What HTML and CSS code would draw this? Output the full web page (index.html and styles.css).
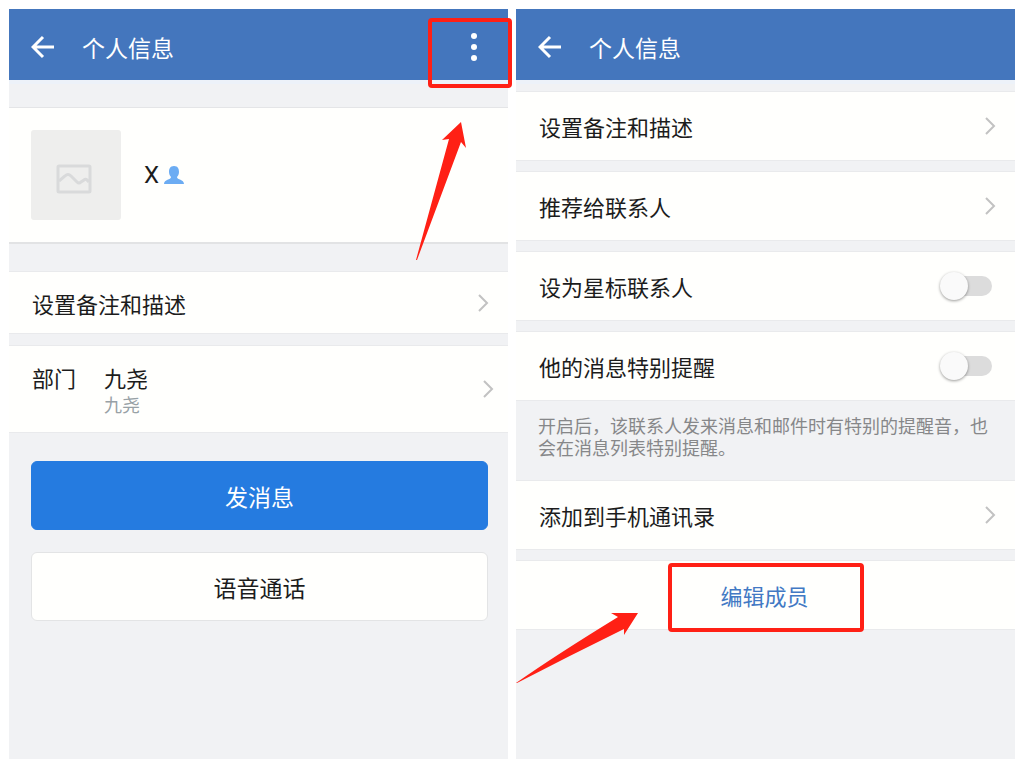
FILE: index.html
```html
<!DOCTYPE html>
<html lang="zh-CN">
<head>
  <meta charset="UTF-8" />
  <meta name="viewport" content="width=device-width, initial-scale=1.0" />
  <title>个人信息</title>
  <link rel="stylesheet" href="styles.css">
</head>
<body>

  <!-- 左侧：个人信息 -->
  <section class="panel">
    <header class="header">
      <button class="icon-btn" aria-label="返回">
        <svg width="24" height="24" viewBox="0 0 24 24"><path d="M12 2 2 12l10 10M2 12h21" fill="none" stroke="#fff" stroke-width="3"/></svg>
      </button>
      <h1 class="title">个人信息</h1>
      <button class="icon-btn menu-btn" aria-label="更多">
        <svg width="8" height="30" viewBox="0 0 8 30"><g fill="#fff"><circle cx="4" cy="4" r="3"/><circle cx="4" cy="15" r="3"/><circle cx="4" cy="26" r="3"/></g></svg>
      </button>
      <div class="mark mark-menu"></div>
    </header>

    <div class="profile">
      <svg class="avatar" viewBox="0 0 90 90">
        <rect x="27" y="36" width="32" height="26" rx="1" fill="none" stroke="#d9dadb" stroke-width="3"/>
        <path d="M28 51l6-5q3-3 6 0l6 6q2 2 4 0l3-2q2-2 5 2" fill="none" stroke="#d9dadb" stroke-width="3"/>
      </svg>
      <span class="name">X</span>
      <svg class="person" width="20" height="19" viewBox="0 0 20 19"><path d="M10 0c4 0 5 3 5 6 0 2-1 4-2 5 0 3 7 2 7 7H0c0-5 7-4 7-7-1-1-2-3-2-5 0-3 1-6 5-6z" fill="#6cacf3"/></svg>
      <svg class="arrow arrow-menu" width="50" height="139" viewBox="0 0 50 139"><path d="M45 0 26 18l7-1L0 138h1L45 20l5 6z"/></svg>
    </div>

    <a class="row row-short" href="#">
      <span>设置备注和描述</span>
      <svg class="chevron" width="11" height="18" viewBox="0 0 11 18"><path d="m1 1 8 8-8 8"/></svg>
    </a>

    <a class="row row-dept" href="#">
      <span class="dept-label">部门</span>
      <span class="dept">九尧<small>九尧</small></span>
      <svg class="chevron" width="11" height="18" viewBox="0 0 11 18"><path d="m1 1 8 8-8 8"/></svg>
    </a>

    <div class="actions">
      <button class="btn btn-primary">发消息</button>
      <button class="btn">语音通话</button>
    </div>
  </section>

  <!-- 右侧：更多设置 -->
  <section class="panel">
    <header class="header">
      <button class="icon-btn" aria-label="返回">
        <svg width="24" height="24" viewBox="0 0 24 24"><path d="M12 2 2 12l10 10M2 12h21" fill="none" stroke="#fff" stroke-width="3"/></svg>
      </button>
      <h1 class="title">个人信息</h1>
    </header>

    <a class="row" href="#">
      <span>设置备注和描述</span>
      <svg class="chevron" width="11" height="18" viewBox="0 0 11 18"><path d="m1 1 8 8-8 8"/></svg>
    </a>
    <a class="row" href="#">
      <span>推荐给联系人</span>
      <svg class="chevron" width="11" height="18" viewBox="0 0 11 18"><path d="m1 1 8 8-8 8"/></svg>
    </a>
    <div class="row">
      <label for="star">设为星标联系人</label>
      <input id="star" class="switch" type="checkbox" />
    </div>
    <div class="row">
      <label for="remind">他的消息特别提醒</label>
      <input id="remind" class="switch" type="checkbox" />
    </div>
    <p class="note">开启后，该联系人发来消息和邮件时有特别的提醒音，也会在消息列表特别提醒。</p>
    <a class="row row-flush" href="#">
      <span>添加到手机通讯录</span>
      <svg class="chevron" width="11" height="18" viewBox="0 0 11 18"><path d="m1 1 8 8-8 8"/></svg>
    </a>
    <div class="row row-edit">
      <button class="edit-btn">编辑成员<span class="mark mark-edit"></span>
        <svg class="arrow arrow-edit" width="122" height="71" viewBox="0 0 122 71"><path d="M122 0H95l7 4Q40 42 0 70h1Q55 42 108 16v6z"/></svg>
      </button>
    </div>
  </section>

</body>
</html>
```
FILE: styles.css
```css
* {
  box-sizing: border-box;
}

body {
  margin: 0;
  padding: 9px 9px 0;
  min-height: 100vh;
  display: flex;
  gap: 8px;
  background: #fff;
  color: #1c1c1c;
  font-family: "Noto Sans CJK SC", sans-serif;
  font-size: 22px;
  line-height: 30px;
}

button {
  font: inherit;
  color: inherit;
  cursor: pointer;
}

a {
  color: inherit;
  text-decoration: none;
}

.panel {
  flex: 1;
  min-width: 0;
  background: #f1f2f4;
}

/* Header */
.header {
  position: relative;
  display: flex;
  align-items: center;
  height: 71px;
  padding: 0 30px 0 22px;
  background: #4476bd;
  box-shadow: 0 4px 0 #edf2f9;
  color: #fff;
}

.icon-btn {
  display: flex;
  padding: 4px 0 0;
  border: none;
  background: none;
}

.menu-btn {
  margin-left: auto;
}

.title {
  margin: 4px 0 0 27px;
  font-size: 23px;
  font-weight: 400;
}

/* Profile card */
.profile {
  position: relative;
  display: flex;
  align-items: center;
  margin-top: 27px;
  padding: 22px;
  background: #fffffd;
  border-top: 1px solid #e4e5e7;
  border-bottom: 2px solid #e2e3e4;
}

.avatar {
  width: 90px;
  height: 90px;
  border-radius: 3px;
  background: #eeeeed;
}

.name {
  margin: 0 5px 0 23px;
  font-family: Roboto, sans-serif;
  font-size: 24px;
}

/* List rows */
.row {
  display: flex;
  align-items: center;
  justify-content: space-between;
  min-height: 68px;
  margin-top: 12px;
  padding: 0 19px 0 23px;
  background: #fffffd;
  box-shadow: 0 -1px 0 #e9eaec, 0 1px 0 #e9eaec;
}

.row-short {
  min-height: 61px;
  margin-top: 28px;
}

.row-dept {
  min-height: 86px;
  margin-top: 13px;
  padding-right: 14px;
}

.row-flush {
  margin-top: 0;
}

.dept-label {
  align-self: flex-start;
  width: 72px;
  margin-top: 16px;
}

.dept {
  flex: 1;
}

.dept small {
  display: block;
  color: #98a1a6;
  font-size: 18px;
  line-height: 24px;
}

.chevron {
  flex: none;
  fill: none;
  stroke: #c2c2c2;
  stroke-width: 2;
}

.note {
  margin: 0;
  min-height: 81px;
  padding: 14px 22px;
  color: #868789;
  font-size: 18px;
  line-height: 22px;
}

/* Switch */
.switch {
  appearance: none;
  position: relative;
  width: 52px;
  height: 28px;
  margin: 0 4px 0 0;
  cursor: pointer;
}

.switch::before {
  content: "";
  position: absolute;
  inset: 4px 0 4px 4px;
  border-radius: 10px;
  background: #dcdcdc;
}

.switch::after {
  content: "";
  position: absolute;
  top: 0;
  left: 0;
  width: 28px;
  height: 28px;
  border-radius: 50%;
  background: #fafafa;
  box-shadow: 0 1px 3px rgba(0, 0, 0, 0.4);
}

.switch:checked::after {
  left: 24px;
}

/* Buttons */
.actions {
  display: flex;
  flex-direction: column;
  gap: 22px;
  padding: 29px 20px 29px 22px;
}

.btn {
  height: 69px;
  padding: 0;
  border: 1px solid #e3e4e5;
  border-radius: 6px;
  background: #fffffd;
  font-size: 23px;
}

.btn-primary {
  border-color: #257be0;
  background: #257be0;
  color: #fff;
}

.row-edit {
  justify-content: center;
  padding: 0 22px 0 20px;
}

.edit-btn {
  position: relative;
  padding: 0;
  border: none;
  background: none;
  color: #4279c4;
}

/* Red marks */
.mark {
  position: absolute;
  border: 4px solid #ff2015;
  border-radius: 4px;
}

.mark-menu {
  top: 9px;
  right: -4px;
  width: 84px;
  height: 70px;
}

.mark-edit {
  top: -17px;
  left: -52px;
  width: 196px;
  height: 69px;
}

.arrow {
  position: absolute;
  fill: #ff2015;
}

.arrow-menu {
  top: 14px;
  right: 42px;
}

.arrow-edit {
  top: 33px;
  right: 171px;
}
```
